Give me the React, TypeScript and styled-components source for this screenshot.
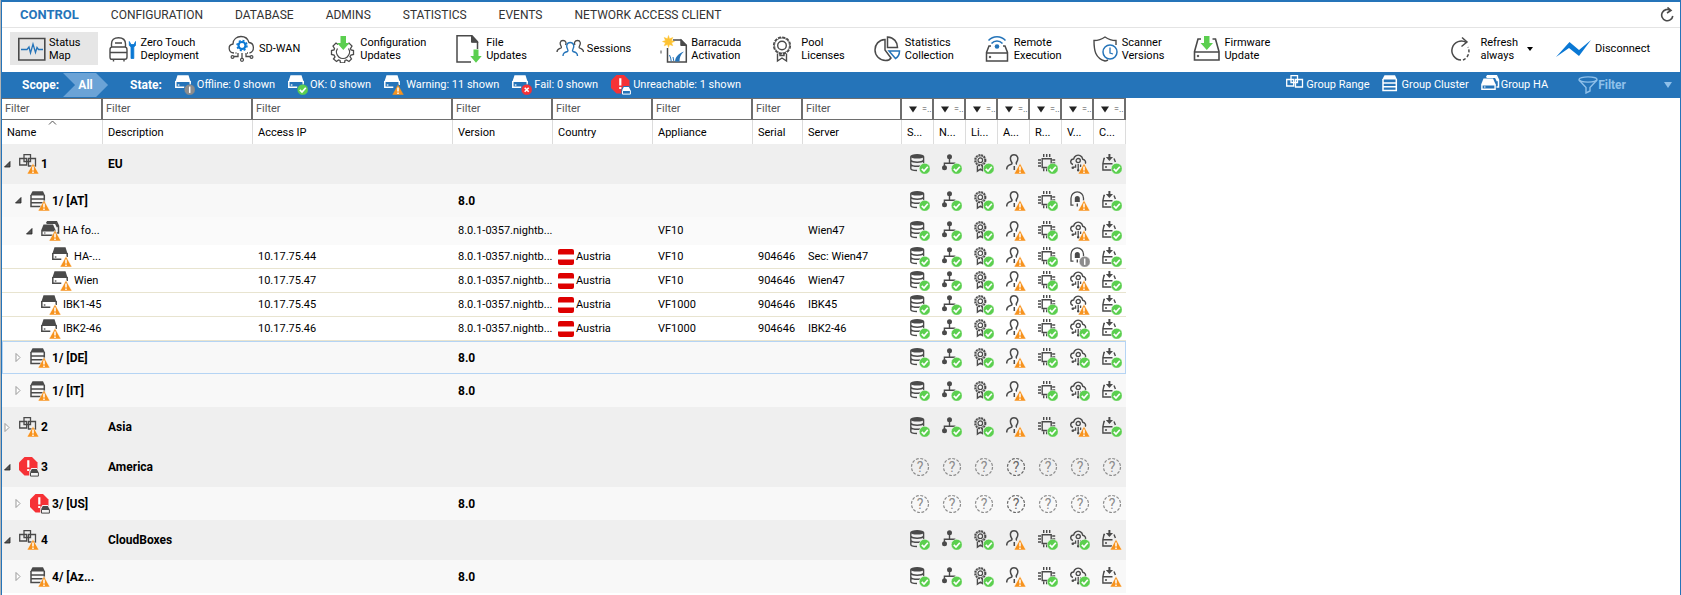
import React from "react";
import styled, { createGlobalStyle, css } from "styled-components";

const BLUE = "#2574b9";
const DARK = "#4a4a4a";
const GREEN = "#5bcf4f";
const ORANGE = "#f7931e";
const RED = "#f63236";

const GlobalStyle = createGlobalStyle`
  *, *::before, *::after { box-sizing: border-box; }
  body {
    margin: 0;
    background: #fff;
    color: #000;
    font: 11px/16px Roboto, "Liberation Sans", sans-serif;
  }
  button, input { font: inherit; color: inherit; }
  button { border: 0; padding: 0; background: none; text-align: left; }
  svg { display: block; flex: none; }
`;

const Window = styled.div`
  min-height: 100vh;
  border-left: 1px solid #b4b4b4;
  overflow: hidden;
`;

const Frame = styled.main`
  min-height: 100vh;
  border: 1px solid ${BLUE};
  border-top-width: 2px;
  border-bottom: 0;
`;

/* ---------- tabs ---------- */

const TabBar = styled.nav`
  display: flex;
  align-items: center;
  height: 26px;
  padding: 0 6px 0 2px;
  border-bottom: 1px solid #e4e4e4;
`;

const Tab = styled.a<{ $active?: boolean }>`
  padding: 0 16px;
  color: ${(p) => (p.$active ? BLUE : "#333")};
  font-weight: ${(p) => (p.$active ? 700 : 400)};
  font-size: ${(p) => (p.$active ? 13 : 12)}px;
  text-decoration: none;
  white-space: nowrap;
`;

const Spacer = styled.span`
  flex: 1;
`;

/* ---------- tool bar ---------- */

const ToolBar = styled.div`
  display: flex;
  align-items: flex-start;
  gap: 3px;
  height: 44px;
  padding: 4px 12px 0 8px;
`;

const ToolButton = styled.button<{ $active?: boolean; $tight?: boolean }>`
  display: flex;
  align-items: center;
  gap: 3px;
  height: 33px;
  padding: 0 ${(p) => (p.$tight ? 8 : 18)}px 0 8px;
  line-height: 13px;
  white-space: pre;
  background: ${(p) => (p.$active ? "#e6e6e6" : "none")};
`;

/* ---------- state bar ---------- */

const StateBar = styled.div`
  display: flex;
  align-items: center;
  height: 26px;
  padding: 0 8px 0 20px;
  background: ${BLUE};
  color: #fff;
`;

const BarLabel = styled.span`
  font-weight: 700;
  font-size: 12px;
`;

const ScopeAll = styled.button`
  height: 24px;
  width: 45px;
  margin: 0 22px 0 4px;
  background: #6ba3d6;
  clip-path: polygon(0 0, 33px 0, 100% 50%, 33px 100%, 0 100%, 12px 50%);
  font-weight: 700;
  font-size: 12px;
  text-align: center;
`;

const StateItem = styled.button`
  display: flex;
  align-items: center;
  gap: 2px;
  margin-left: 13px;
  white-space: nowrap;
`;

const GroupItem = styled(StateItem)`
  gap: 0;
  margin-left: 12px;
`;

const FilterButton = styled(GroupItem)`
  margin: 0 38px 0 30px;
  color: #8fc0ea;
  font-weight: 700;
  font-size: 12px;
`;

/* ---------- table ---------- */

const Grid = styled.table`
  width: 1124px;
  table-layout: fixed;
  border-collapse: separate;
  border-spacing: 0;
  td, th { padding: 0; }
`;

const FilterCell = styled.td`
  height: 22px;
  border: 1px solid #6e6e6e;
  border-left-width: 0;
  border-right-width: 2px;
`;

const FilterInput = styled.input`
  display: block;
  width: 100%;
  height: 18px;
  padding: 0 0 2px 3px;
  border: 0;
  outline: 0;
  background: none;
  &::placeholder { color: #555; opacity: 1; }
`;

const FilterDrop = styled.button`
  display: flex;
  align-items: center;
  gap: 5px;
  width: 100%;
  height: 18px;
  padding-left: 7px;
  color: #444;
  font-size: 9px;
`;

const HeadCell = styled.th`
  position: relative;
  height: 24px;
  border-right: 1px solid #dcdcdc;
  && { padding: 2px 0 0 5px; }
  font-weight: 400;
  text-align: left;
  white-space: nowrap;
`;

const SortMark = styled.svg`
  position: absolute;
  top: 0;
  left: 46px;
`;

type Kind = "range" | "cluster" | "ha" | "box";

const rowKinds = {
  range: css`height: 40px; background: #efefef; font-weight: 700; font-size: 12px;`,
  cluster: css`height: 33px; background: #f8f8f8; font-weight: 700; font-size: 12px;`,
  ha: css`height: 28px; background: #fafafa;`,
  box: css`height: 24px; > td { border-bottom: 1px solid #e8e4d0; }`,
};

const Row = styled.tr<{ $kind: Kind; $selected?: boolean }>`
  ${(p) => rowKinds[p.$kind]}
  ${(p) => p.$selected && css`outline: 1px solid #b5d4f4; outline-offset: -1px;`}
`;

const Cell = styled.td`
  && { padding-left: 5px; }
  white-space: nowrap;
`;

const StatusCell = styled.td`
  && { padding-left: 8px; }
`;

const NameLine = styled.div<{ $level: number }>`
  display: flex;
  align-items: center;
  gap: 2px;
  padding-left: ${(p) => 2 + p.$level * 11}px;
  white-space: nowrap;
`;

const Toggle = styled.button`
  flex: none;
  width: 13px;
  height: 13px;
`;

const CountryLine = styled.span`
  display: flex;
  align-items: center;
  gap: 2px;
`;

/* ---------- badges ---------- */

type Badge = "ok" | "warn" | "info" | "fail";

function BadgeMark({ kind, halo = "#fff" }: { kind: Badge; halo?: string }) {
  if (kind === "warn")
    return (
      <g>
        <path d="M14 9.2 20 20H8Z" fill={ORANGE} stroke={halo} strokeWidth="0.5" />
        <path d="M14 12.600v4M14 17.600v1.400" stroke="#fff" strokeWidth="1.500" />
      </g>
    );
  const fill = kind === "ok" ? GREEN : kind === "info" ? "#8c8c8c" : RED;
  return (
    <g>
      <circle cx="14.700" cy="14.700" r="5.500" fill={fill} stroke={halo} strokeWidth="0.5" />
      {kind === "ok" && <path d="M11.800 14.800l2.200 2.200 3.800-4.300" fill="none" stroke="#fff" strokeWidth="1.700" />}
      {kind === "info" && <path d="M14.700 11.500v6.400" stroke="#fff" strokeWidth="1.500" />}
      {kind === "fail" && <path d="M12.700 12.700l4 4M16.700 12.700l-4 4" stroke="#fff" strokeWidth="1.600" />}
    </g>
  );
}

type IconProps = { badge?: Badge; color?: string; halo?: string };

function Icon20({ children, badge, halo }: React.PropsWithChildren<IconProps>) {
  return (
    <svg width="20" height="20" viewBox="0 0 20 20" fill="none" aria-hidden="true">
      {children}
      {badge && <BadgeMark kind={badge} halo={halo} />}
    </svg>
  );
}

/* ---------- row icons ---------- */

const BoxIcon = ({ badge, color = DARK, halo }: IconProps) => (
  <Icon20 badge={badge} halo={halo}>
    <path d="M2.500 0.300h11l2.200 6.700H0.300Z" fill={color} />
    <path d="M0.800 6v6.300h8.500M15.200 6v4" stroke={color} strokeWidth="1.500" />
    <path d="M2.800 10h1.600" stroke={color} strokeWidth="1.300" />
  </Icon20>
);

const RangeIcon = ({ badge, color = DARK }: IconProps) => (
  <Icon20 badge={badge}>
    <path d="M0.700 4.500h7v6.500h-7ZM5 0.700h6.500v6.800H5ZM9.500 4.500h7V12h-7Z" stroke={color} strokeWidth="1.300" />
  </Icon20>
);

const ClusterIcon = ({ badge, color = DARK }: IconProps) => (
  <Icon20 badge={badge}>
    <path d="M2.500 0.300h10.500L15 4.500H0.300Z" fill={color} />
    <path d="M1 4v11.500h13.300V4M1 8h13.300M1 11.800h13.300" stroke={color} strokeWidth="1.500" />
  </Icon20>
);

const HaIcon = ({ badge, color = DARK, halo = "#fafafa" }: IconProps) => (
  <Icon20 badge={badge} halo={halo}>
    <path d="M5.500 2.500 6.500 0.800h9L17.500 5v7h-2M5.500 2.200h9l2 4" stroke={color} strokeWidth="1.500" />
    <path d="M2.500 3.500h9.500L14.500 9H0.300Z" fill={color} />
    <path d="M0.900 9.700v4.600h13.200V9.700Z" stroke={color} strokeWidth="1.400" />
    <path d="M3 12h1.500" stroke={color} strokeWidth="1.200" />
  </Icon20>
);

const UnreachableIcon = ({ color = DARK, halo = "#f4f4f4" }: IconProps) => (
  <Icon20>
    <path d="M5.500 0h7.500L18.500 5.500V13L13 18.500H5.500L0 13V5.500Z" fill={RED} />
    <path d="M9.300 3.300v7.200M9.300 12v2" stroke="#fff" strokeWidth="2.200" />
    <path d="M10.300 14.500 12.300 11h5.700l2 3.500V20h-9.700Z" fill={halo} />
    <path d="M12.800 12h5l1.600 3h-8.200Z" fill={color} />
    <path d="M11.500 15.500v3.600h7.900v-3.600Z" stroke={color} strokeWidth="1" />
  </Icon20>
);

/* ---------- status icons ---------- */

const statusDrawings: Record<string, React.ReactNode> = {
  server: (
    <>
      <ellipse cx="7.200" cy="2.300" rx="7" ry="2.300" fill={DARK} />
      <path d="M0.800 2.500V14.500c0 1.200 3 2 6.200 2M13.600 2.500v7M0.800 6.300c1 1.300 3.500 1.900 6.400 1.900s5.400-.6 6.400-1.900M0.800 10.500c1 1.200 3.500 1.800 6.400 1.800 1 0 2-.1 3-.3" stroke={DARK} strokeWidth="1.400" />
    </>
  ),
  network: (
    <>
      <circle cx="7.500" cy="2.800" r="2.500" fill={DARK} />
      <circle cx="2.500" cy="13.800" r="2.500" fill={DARK} />
      <path d="M7.500 4v5.200M2.400 13V9.200h10.300V11" stroke={DARK} strokeWidth="1.400" />
    </>
  ),
  license: (
    <>
      <circle cx="6.300" cy="6.200" r="5.300" stroke={DARK} strokeWidth="1.600" strokeDasharray="2 .8" />
      <circle cx="6.300" cy="6.200" r="4.300" stroke={DARK} strokeWidth=".8" />
      <circle cx="6.300" cy="6.200" r="2.300" stroke={DARK} strokeWidth="1.200" />
      <path d="M3.400 11.500v5.700l3-2 2 1.300v-5" stroke={DARK} strokeWidth="1.400" />
    </>
  ),
  admin: (
    <path d="M0.700 15.500c0-3.500 1.600-4.200 4.500-5.200 1-.4 1-1.300.3-2.300C3.700 5 4 0.800 8 .8s4.700 4.200 2.700 7.200c-.6 1-.6 1.900.2 2.200M8.300 12v4" stroke={DARK} strokeWidth="1.500" />
  ),
  resource: (
    <path d="M4.200 4.700h9v8.800h-9ZM5.700 0v3M8.700 0v3M11.700 0v3M5.700 14.500v2.700M8.700 14.500v2.700M0 6h3M0 9h3M0 12h3M14.200 6h3M14.200 9h3" stroke={DARK} strokeWidth="1.400" />
  ),
  cloud: (
    <>
      <path d="M3 10.500C-.5 9.500.3 5 3.600 5 4.300 1.800 7.600.2 10.200 1.700c1.800.9 2.300 2.300 2.500 3.500 2.600.4 3.400 2.800 2.500 4.500" stroke={DARK} strokeWidth="1.400" />
      <circle cx="8.200" cy="6.600" r="2.100" stroke={DARK} strokeWidth="1.300" />
      <path d="M8.200 10v6.500M5.600 10.500v2.700H3.200M10.600 10.500V13" stroke={DARK} strokeWidth="1.300" />
      <circle cx="2.800" cy="13.700" r="1.300" fill={DARK} />
      <circle cx="8.200" cy="16.200" r="1.200" fill={DARK} />
    </>
  ),
  tunnel: (
    <>
      <path d="M1 14.500V7.200a6.200 6.200 0 0 1 12.500 0V9.500M0.500 14.200h3" stroke={DARK} strokeWidth="1.300" />
      <path d="M4.800 11V7.500a2.500 2.500 0 0 1 5 0V11Z" fill={DARK} />
      <path d="M7.300 12.500v3" stroke={DARK} strokeWidth="1.400" />
    </>
  ),
  update: (
    <>
      <path d="M7.400 0v4" stroke={DARK} strokeWidth="2" />
      <path d="M3.800 3h7.200L7.400 7Z" fill={DARK} />
      <path d="M3 4.500H2L.9 9.500V16H10M12 4.500l1.400 3.500M.9 9.700h9.600M3 13h2" stroke={DARK} strokeWidth="1.400" />
    </>
  ),
};

const UnknownMark = ({ color = "#8c8c8c" }: { color?: string }) => (
  <svg width="20" height="20" viewBox="0 0 20 20" fill="none" role="img" aria-label="Unknown">
    <circle cx="10" cy="10" r="8.500" stroke={color} strokeWidth="1.200" strokeDasharray="2.900 1.550" />
    <text x="10" y="15" textAnchor="middle" fontSize="14" fontWeight="400" fill={color}>?</text>
  </svg>
);

/* ---------- data ---------- */

const columns = [
  { label: "Name", width: 101 },
  { label: "Description", width: 150 },
  { label: "Access IP", width: 200 },
  { label: "Version", width: 100 },
  { label: "Country", width: 100 },
  { label: "Appliance", width: 100 },
  { label: "Serial", width: 50 },
  { label: "Server", width: 99 },
];

const statusColumns = ["S...", "N...", "Li...", "A...", "R...", "V...", "C..."];
const statusKeys = ["server", "network", "license", "admin", "resource", "vpn", "update"];

type RowData = {
  kind: Kind;
  level: number;
  name: string;
  open?: boolean;
  leaf?: boolean;
  down?: boolean;
  selected?: boolean;
  description?: string;
  ip?: string;
  version?: string;
  austria?: boolean;
  appliance?: string;
  serial?: string;
  server?: string;
  vpn?: ["cloud" | "tunnel", Badge];
  update?: Badge;
};

const NIGHTLY = "8.0.1-0357.nightb...";

const rows: RowData[] = [
  { kind: "range", level: 0, name: "1", open: true, description: "EU", vpn: ["cloud", "warn"] },
  { kind: "cluster", level: 1, name: "1/ [AT]", open: true, version: "8.0", vpn: ["tunnel", "warn"] },
  { kind: "ha", level: 2, name: "HA fo...", open: true, version: NIGHTLY, appliance: "VF10", server: "Wien47", vpn: ["cloud", "warn"] },
  { kind: "box", level: 3, name: "HA-...", leaf: true, ip: "10.17.75.44", version: NIGHTLY, austria: true, appliance: "VF10", serial: "904646", server: "Sec: Wien47", vpn: ["tunnel", "info"] },
  { kind: "box", level: 3, name: "Wien", leaf: true, ip: "10.17.75.47", version: NIGHTLY, austria: true, appliance: "VF10", serial: "904646", server: "Wien47", vpn: ["cloud", "warn"] },
  { kind: "box", level: 2, name: "IBK1-45", leaf: true, ip: "10.17.75.45", version: NIGHTLY, austria: true, appliance: "VF1000", serial: "904646", server: "IBK45", vpn: ["cloud", "warn"] },
  { kind: "box", level: 2, name: "IBK2-46", leaf: true, ip: "10.17.75.46", version: NIGHTLY, austria: true, appliance: "VF1000", serial: "904646", server: "IBK2-46", vpn: ["cloud", "ok"] },
  { kind: "cluster", level: 1, name: "1/ [DE]", selected: true, version: "8.0", vpn: ["cloud", "ok"] },
  { kind: "cluster", level: 1, name: "1/ [IT]", version: "8.0", vpn: ["cloud", "ok"] },
  { kind: "range", level: 0, name: "2", description: "Asia", vpn: ["cloud", "warn"] },
  { kind: "range", level: 0, name: "3", open: true, down: true, description: "America" },
  { kind: "cluster", level: 1, name: "3/ [US]", down: true, version: "8.0" },
  { kind: "range", level: 0, name: "4", open: true, description: "CloudBoxes", vpn: ["cloud", "ok"], update: "warn" },
  { kind: "cluster", level: 1, name: "4/ [Az...", version: "8.0", vpn: ["cloud", "ok"], update: "warn" },
];

const kindIcons = { range: RangeIcon, cluster: ClusterIcon, ha: HaIcon, box: BoxIcon };

function statusOf(row: RowData, key: string): [string, Badge] {
  if (key === "vpn") return row.vpn ?? ["cloud", "ok"];
  if (key === "update") return ["update", row.update ?? "ok"];
  return [key, key === "admin" ? "warn" : "ok"];
}

function TreeRow({ row }: { row: RowData }) {
  const KindIcon = kindIcons[row.kind];
  return (
    <Row $kind={row.kind} $selected={row.selected}>
      <td>
        <NameLine $level={row.level}>
          {row.leaf ? (
            <Toggle as="span" />
          ) : (
            <Toggle aria-label={row.open ? "Collapse" : "Expand"}>
              <svg width="8" height="13" viewBox="0 0 8 13" fill="none">
                {row.open ? (
                  <path d="M6 3.500V9H0.500Z" fill="#555" stroke="#222" strokeWidth=".8" />
                ) : (
                  <path d="M1 2.500v8l4-4Z" fill="#fff" stroke="#999" />
                )}
              </svg>
            </Toggle>
          )}
          {row.down ? <UnreachableIcon /> : <KindIcon badge="warn" />}
          <span>{row.name}</span>
        </NameLine>
      </td>
      <Cell>{row.description}</Cell>
      <Cell>{row.ip}</Cell>
      <Cell>{row.version}</Cell>
      <Cell>
        {row.austria && (
          <CountryLine>
            <svg width="16" height="16" viewBox="0 0 16 16" aria-hidden="true">
              <rect width="16" height="16" rx="2" fill="#de0000" />
              <path d="M0 5.500h16v5H0Z" fill="#fff" />
            </svg>
            Austria
          </CountryLine>
        )}
      </Cell>
      <Cell>{row.appliance}</Cell>
      <Cell>{row.serial}</Cell>
      <Cell>{row.server}</Cell>
      {statusKeys.map((key) => {
        const [drawing, badge] = statusOf(row, key);
        return (
          <StatusCell key={key}>
            {row.down ? (
              <UnknownMark color={key === "admin" ? "#666" : undefined} />
            ) : (
              <Icon20 badge={badge}>{statusDrawings[drawing]}</Icon20>
            )}
          </StatusCell>
        );
      })}
    </Row>
  );
}

/* ---------- tool bar icons, drawn in a 28px square ---------- */

const toolDrawings: Record<string, React.ReactNode> = {
  status: (
    <>
      <path d="M0.800 3.500h26v21.500h-26Z" strokeWidth="1.600" />
      <path d="M3 14.500h6l2-2.500 1.500 6L15 9l2.500 8.500 1.500-5 1.500 2H25" stroke={BLUE} strokeWidth="1.300" />
    </>
  ),
  ztd: (
    <>
      <path d="M2.500 12V9c0-4 2.500-6.300 7-6.300s7 2.300 7 6.300v3M3 12h13c2 0 2 1.500 2 3v7c0 1.500-.5 2.300-2 2.300H3c-1.500 0-2-.8-2-2.300v-7c0-1.500 0-3 2-3ZM6 8h7M1 17.500h17M4.500 24.500V26.500M15 24.500V26.500" strokeWidth="1.400" />
      <path d="M20.300 6.500v4l1.700 1.500v11.500h2.800V12l1.700-1.500v-4l-1.500 3h-3Z" fill="#0a78d4" stroke="#0a78d4" strokeWidth=".8" />
    </>
  ),
  sdwan: (
    <>
      <path d="M6 18c-6-.5-6.500-8-1-9C5 4 9 1.500 13 1.500s7 2.500 8 6c5.500.5 6 9 .5 10.500M8.500 18h-1M19 18h1" strokeWidth="1.300" />
      <circle cx="14" cy="10.500" r="3.500" stroke="#0a78d4" strokeWidth="2.200" />
      <circle cx="14" cy="10.500" r="5" stroke="#0a78d4" strokeWidth="1.500" strokeDasharray="2 1.920" />
      <path d="M14 18v5M10 18v3.500H6M18 18v3.500h4" strokeWidth="1.300" />
      <circle cx="14" cy="24.800" r="1.500" strokeWidth="1.200" />
      <circle cx="4.500" cy="22" r="1.400" strokeWidth="1.200" />
      <circle cx="23.500" cy="22" r="1.400" strokeWidth="1.200" />
    </>
  ),
  config: (
    <>
      <path d="M9 9.500l-2-1.500-3 3 1.500 2.500-.5 1.500-2.500.5v4l2.500.5 1 2-1.500 2 3 2.500 2-1.500 1.500.5.500 2.500h4l.5-2.500 1.500-.5 2.500 1.500 2.500-2.500-1.500-2.500 1-1.500 2.500-.5v-4l-2.500-.5-.5-1.500 1.500-2.500-3-3-2 1.500" strokeWidth="1.300" />
      <path d="M8.500 13.500a6.500 6.500 0 1 0 11 0" strokeWidth="1.300" />
      <path d="M11.500 1h5.500v7h3.500l-6.200 7L8 8h3.500Z" fill={GREEN} stroke="none" />
    </>
  ),
  file: (
    <>
      <path d="M16 27H2V0.800h15l5.500 6V14" strokeWidth="1.500" />
      <path d="M16.500 0.800v6.500H23Z" fill={DARK} />
      <path d="M18.500 14.500h5V21h3.200L21 27.800 15.300 21h3.200Z" fill={GREEN} stroke="none" />
    </>
  ),
  sessions: (
    <>
      <path d="M1 17c0-3 1.500-3 4-4 .6-.5.5-1 0-2C3.500 8.500 4 5.500 7 5.500S10.500 8 9.500 10M27.500 17c0-3-1.500-3-4-4-.6-.5-.5-1 0-2 1.500-2.500 1-5.500-2-5.500S18 8 19 10" strokeWidth="1.300" />
      <path d="M7 21c0-3 1.500-3.500 4.500-4.500.8-.5.500-1.500 0-2.500-1.500-2.500-1-6.500 2.700-6.500s4.300 4 2.800 6.500c-.5 1-.8 2 0 2.500 3 1 4.500 1.500 4.500 4.500" stroke={BLUE} strokeWidth="1.400" />
    </>
  ),
  activation: (
    <>
      <path d="M7.500 13v14h18.800V10.500L21 5H13" strokeWidth="1.500" />
      <path d="M20.800 4.500v6H27Z" fill={DARK} />
      <path d="M1 15.500v3" strokeWidth="1" />
      <path d="M9.500 20c1 2 1.500 4 1.800 6.500M13 22l.8 4" stroke={BLUE} />
      <path d="M15 26.500c.5-5 3.500-8 9-10-3.500 3-4.500 6-4.500 10Z" fill={BLUE} stroke="none" />
      <path d="M8.500 0.500l1 3.300 3.300-1.300L11.500 5.500l3 1L11.500 7.700l1.300 3L9.500 9.500l-1 3-1-3-3.300 1.300L5.500 7.700l-3-1.200 3-1L4.200 2.500l3.300 1.300Z" fill="#fdc232" stroke="#fdc232" strokeWidth=".5" />
    </>
  ),
  pool: (
    <>
      <circle cx="12" cy="10.500" r="8.300" strokeWidth="1.600" strokeDasharray="3.200 1.140" />
      <circle cx="12" cy="10.500" r="7.500" strokeWidth=".8" />
      <circle cx="12" cy="10.500" r="4.300" strokeWidth="1.400" />
      <path d="M7.500 18.500v7.500l4.500-3 4.500 3V18.500M10 18.500v2h4v-2" strokeWidth="1.400" />
    </>
  ),
  stats: (
    <>
      <path d="M11 4.500C4.500 5 1 9.500 1 15s4.500 10.500 10.500 10.500c3 0 4.500-1 5.500-2.500L11 15Z" strokeWidth="1.500" />
      <path d="M13.500 2v10.500h10C23.500 7 20 2.500 13.500 2Z" strokeWidth="1.500" />
      <path d="M15 16h10.500c0 3.500-1.500 6-4 7.500Z" stroke={BLUE} strokeWidth="1.500" />
    </>
  ),
  remote: (
    <>
      <path d="M8 11H6L3.500 17.500V26h21v-8.500L22 11h-2M3.500 18h21" strokeWidth="1.500" />
      <circle cx="7" cy="22" r=".8" fill={DARK} />
      <circle cx="14" cy="11.500" r="2.300" fill={BLUE} stroke="none" />
      <path d="M5.500 5.500c4.500-5 12.500-5 17 0M8.500 8.500c3-3.500 8-3.500 11 0" stroke={BLUE} strokeWidth="1.500" />
    </>
  ),
  scanner: (
    <>
      <path d="M25 10V5.500c-4 0-7.500-1-11-3.500C10.500 4.500 7 5.500 3 5.500 3 15 4 23 14 26c1 0 2-.5 3-1" strokeWidth="1.400" />
      <circle cx="19" cy="17" r="7" fill="#fff" stroke={BLUE} strokeWidth="1.500" />
      <path d="M19 12.500V18l3 1" stroke={BLUE} strokeWidth="1.300" />
    </>
  ),
  firmware: (
    <>
      <path d="M8 4H5L1.500 16.500V25h24.500v-8.500L22.500 4h-3M1.500 17h24.500" strokeWidth="1.600" />
      <circle cx="5" cy="21" r=".8" fill={DARK} />
      <path d="M11 1h5.500v7H20l-6.200 7L7.500 8H11Z" fill={GREEN} stroke="none" />
    </>
  ),
  refresh: (
    <>
      <path d="M17.500 7.500A9.500 9.500 0 1 0 12 25" strokeWidth="1.500" />
      <path d="M14 25a9.500 9.500 0 0 0 5-13" strokeWidth="1.500" strokeDasharray="3 2" />
      <path d="M13 2.500l5 4.500-5.500 4.500" strokeWidth="1.500" />
    </>
  ),
};

const ToolIcon = ({ name }: { name: string }) => (
  <svg width="28" height="28" viewBox="0 0 28 28" fill="none" stroke={DARK} aria-hidden="true">
    {toolDrawings[name]}
  </svg>
);

const tabs = ["CONTROL", "CONFIGURATION", "DATABASE", "ADMINS", "STATISTICS", "EVENTS", "NETWORK ACCESS CLIENT"];

const tools: [string, string][] = [
  ["status", "Status\nMap"],
  ["ztd", "Zero Touch\nDeployment"],
  ["sdwan", "SD-WAN"],
  ["config", "Configuration\nUpdates"],
  ["file", "File\nUpdates"],
  ["sessions", "Sessions"],
  ["activation", "Barracuda\nActivation"],
  ["pool", "Pool\nLicenses"],
  ["stats", "Statistics\nCollection"],
  ["remote", "Remote\nExecution"],
  ["scanner", "Scanner\nVersions"],
  ["firmware", "Firmware\nUpdate"],
];

const states: [Badge, string][] = [
  ["info", "Offline: 0 shown"],
  ["ok", "OK: 0 shown"],
  ["warn", "Warning: 11 shown"],
  ["fail", "Fail: 0 shown"],
];

export default function App() {
  return (
    <Window>
      <GlobalStyle />
      <Frame>
        <TabBar>
          {tabs.map((tab, i) => (
            <Tab key={tab} href="#" $active={i === 0}>{tab}</Tab>
          ))}
          <Spacer />
          <button aria-label="Reload">
            <svg width="14" height="16" viewBox="0 0 14 16" fill="none" stroke={DARK} strokeWidth="1.600">
              <path d="M10.500 3.500A5.600 5.600 0 1 0 12.800 9M7.500 0.500l3.500 3-4 2.500" />
            </svg>
          </button>
        </TabBar>

        <ToolBar>
          {tools.map(([icon, label], i) => (
            <ToolButton key={icon} $active={i === 0}>
              <ToolIcon name={icon} />
              <span>{label}</span>
            </ToolButton>
          ))}
          <Spacer />
          <ToolButton $tight>
            <ToolIcon name="refresh" />
            <span>{"Refresh\nalways"}</span>
            <svg width="16" height="6" viewBox="0 0 16 6" aria-hidden="true">
              <path d="M6 1h6L9 5Z" fill="#000" />
            </svg>
          </ToolButton>
          <ToolButton>
            <svg width="36" height="20" viewBox="0 0 36 20" aria-hidden="true">
              <path d="M0 18 13.500 3 23 11 35 1 23 17 13 9Z" fill="#0a78d4" />
            </svg>
            <span>Disconnect</span>
          </ToolButton>
        </ToolBar>

        <StateBar>
          <BarLabel>Scope:</BarLabel>
          <ScopeAll>All</ScopeAll>
          <BarLabel>State:</BarLabel>
          {states.map(([badge, label]) => (
            <StateItem key={badge}>
              <BoxIcon badge={badge} color="#fff" halo={BLUE} />
              {label}
            </StateItem>
          ))}
          <StateItem>
            <UnreachableIcon color="#fff" halo={BLUE} />
            Unreachable: 1 shown
          </StateItem>
          <Spacer />
          <GroupItem>
            <RangeIcon color="#fff" />
            Group Range
          </GroupItem>
          <GroupItem>
            <ClusterIcon color="#fff" />
            Group Cluster
          </GroupItem>
          <GroupItem>
            <HaIcon color="#fff" />
            Group HA
          </GroupItem>
          <FilterButton>
            <svg width="20" height="18" viewBox="0 0 20 18" fill="none" stroke="#8fc0ea" strokeWidth="1.400">
              <ellipse cx="10" cy="3.500" rx="9" ry="2.600" />
              <path d="M1 4l7 7.500V17l4-2v-3.500L19 4" />
            </svg>
            Filter
          </FilterButton>
          <button aria-label="Filter options">
            <svg width="8" height="6" viewBox="0 0 8 6"><path d="M0 0h8L4 6Z" fill="#8fc0ea" /></svg>
          </button>
        </StateBar>

        <Grid>
          <colgroup>
            {columns.map((c) => <col key={c.label} width={c.width} />)}
            {statusColumns.map((c) => <col key={c} width={32} />)}
          </colgroup>
          <thead>
            <tr>
              {columns.map((c) => (
                <FilterCell key={c.label}>
                  <FilterInput placeholder="Filter" aria-label={`Filter ${c.label}`} />
                </FilterCell>
              ))}
              {statusColumns.map((c) => (
                <FilterCell key={c}>
                  <FilterDrop aria-label={`Filter ${c}`}>
                    <svg width="8" height="7" viewBox="0 0 8 7"><path d="M0 0.500h8L4 6.500Z" fill="#222" /></svg>
                    <span>=..</span>
                  </FilterDrop>
                </FilterCell>
              ))}
            </tr>
            <tr>
              {columns.map((c, i) => (
                <HeadCell key={c.label}>
                  {i === 0 && (
                    <SortMark width="9" height="5" viewBox="0 0 9 5" fill="none" stroke="#555">
                      <path d="M1 4.500 4.500 1 8 4.500" />
                    </SortMark>
                  )}
                  {c.label}
                </HeadCell>
              ))}
              {statusColumns.map((c) => <HeadCell key={c}>{c}</HeadCell>)}
            </tr>
          </thead>
          <tbody>
            {rows.map((row) => <TreeRow key={row.name} row={row} />)}
          </tbody>
        </Grid>
      </Frame>
    </Window>
  );
}
